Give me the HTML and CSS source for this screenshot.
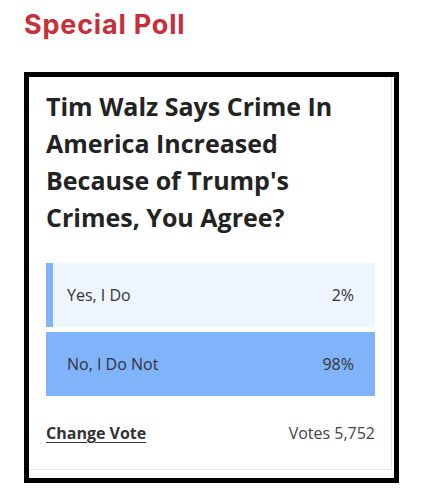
FILE: index.html
```html
<!DOCTYPE html>
<html lang="en">
<head>
<meta charset="utf-8">
<title>Special Poll</title>
<link rel="stylesheet" href="styles.css">
</head>
<body>
  <h2 class="heading">Special Poll</h2>
  <div class="frame">
    <div class="card">
      <h3 class="question">Tim Walz Says Crime In America Increased Because of Trump's Crimes, You Agree?</h3>
      <div class="options">
        <div class="option">
          <div class="fill" style="width: 2%"></div>
          <span class="label">Yes, I Do</span>
          <span class="pct">2%</span>
        </div>
        <div class="option">
          <div class="fill" style="width: 100%"></div>
          <span class="label">No, I Do Not</span>
          <span class="pct">98%</span>
        </div>
      </div>
      <div class="footer">
        <a class="change" href="#">Change Vote</a>
        <span class="votes">Votes 5,752</span>
      </div>
    </div>
  </div>
</body>
</html>
```
FILE: styles.css
```css
html, body {
  margin: 0;
  padding: 0;
  background: #ffffff;
}
body {
  padding: 9px 24px 0;
  font-family: "Open Sans", "Liberation Sans", sans-serif;
}
.heading {
  margin: 0;
  font-family: Inter, "Noto Sans", sans-serif;
  font-weight: 700;
  font-size: 27px;
  line-height: 32px;
  color: #c6303a;
  letter-spacing: 0.8px;
}
.frame {
  margin-top: 31px;
  border: 5px solid #000;
  background: #fff;
}
.card {
  margin-right: 2px;
  margin-bottom: 8px;
  border-right: 1px solid #e2e2e2;
  border-bottom: 1px solid #e6e6e6;
  padding: 11px 16px 24px 17px;
}
.question {
  margin: 0;
  font-size: 25px;
  line-height: 37px;
  font-weight: 700;
  color: #232323;
}
.options {
  margin-top: 27px;
  display: flex;
  flex-direction: column;
  gap: 5px;
}
.option {
  position: relative;
  height: 64px;
  background: #eef5ff;
  display: flex;
  align-items: center;
  justify-content: space-between;
  padding: 0 21px;
  font-size: 16px;
  color: #333;
}
.fill {
  position: absolute;
  left: 0;
  top: 0;
  bottom: 0;
  background: #80b3fa;
}
.label, .pct {
  position: relative;
}
.footer {
  margin-top: 25px;
  display: flex;
  justify-content: space-between;
  align-items: center;
  font-size: 16px;
  line-height: 24px;
}
.change {
  font-weight: 700;
  color: #333;
  text-decoration: underline;
  text-underline-offset: 3px;
}
.votes {
  color: #444;
}
```
